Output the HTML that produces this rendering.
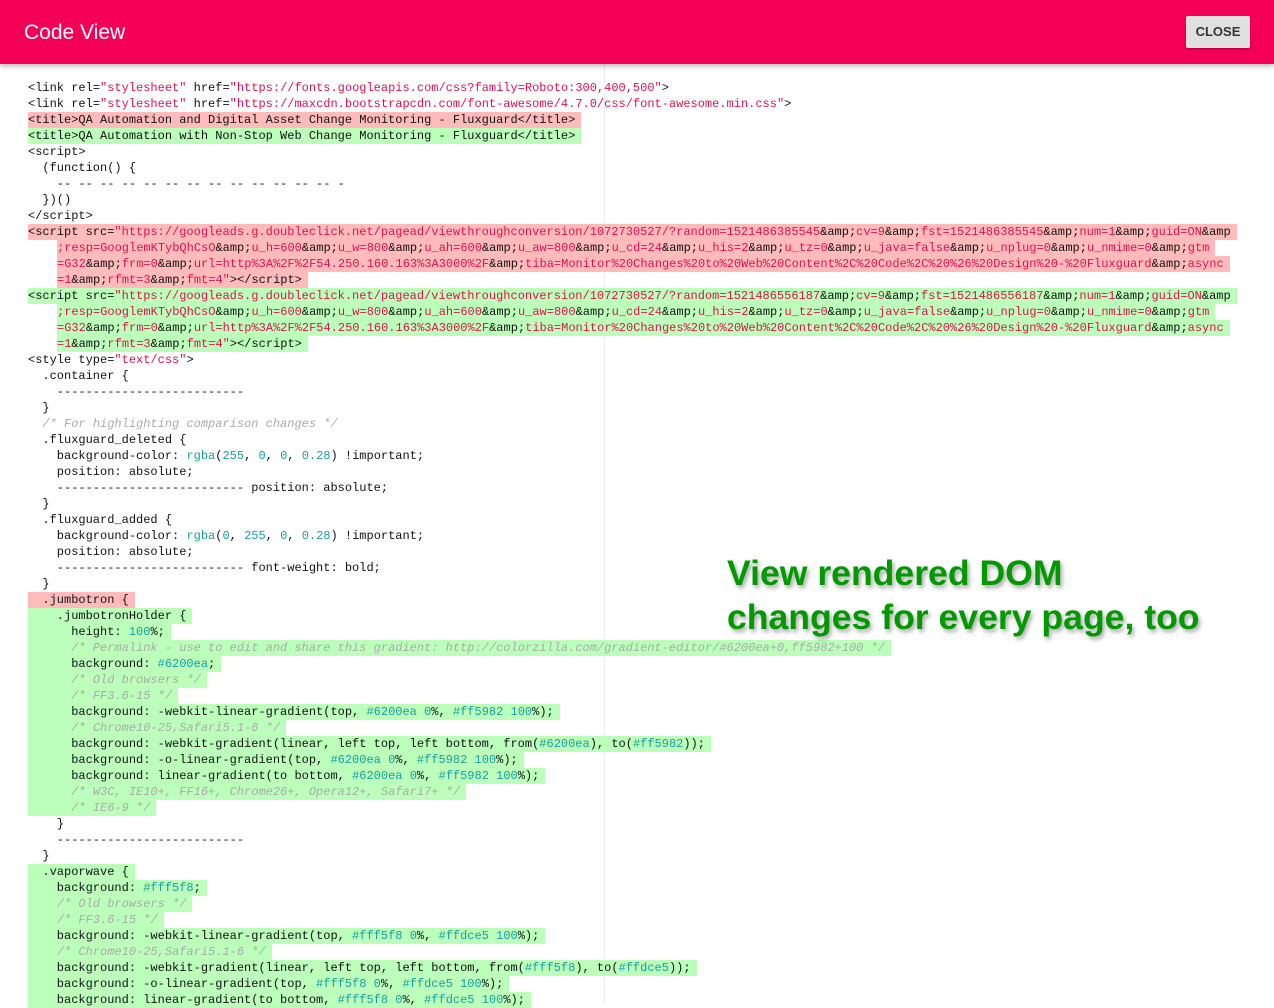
<!DOCTYPE html>
<html><head><meta charset="utf-8">
<style>
html,body{margin:0;padding:0;width:1274px;height:1003px;overflow:hidden;background:#fff;}
.hdr{position:absolute;left:0;top:0;width:1274px;height:64px;background:#f50057;box-shadow:0 2px 5px rgba(0,0,0,0.3);z-index:2;}
.hdr .t{position:absolute;left:24px;top:21px;font:500 21px "Liberation Sans",sans-serif;color:#fff;}
.btn{position:absolute;left:1186px;top:16px;width:64px;height:32px;background:#e0e0e0;border-radius:2px;box-shadow:0 1px 2px rgba(0,0,0,0.3);font:bold 13px "Liberation Sans",sans-serif;color:#333;text-align:center;line-height:32px;}
.vl{position:absolute;left:604px;top:64px;width:1px;height:939px;background:#ececec;}
.code{position:absolute;left:28px;top:80px;font-family:"Liberation Mono",monospace;font-size:12px;line-height:16px;color:#111;}
.l{height:16px;white-space:pre;}
.d,.a{display:inline-block;height:16px;padding-right:6px;vertical-align:top;}
.d{background:#ffbbbb;}
.a{background:#bbffbb;}
.ind{margin-left:29px;}
.s{color:#e0114f;}
.n{color:#16a0a0;}
.c{color:#aaa;font-style:italic;}
.big{position:absolute;left:727px;top:551px;font:bold 35.6px/44px "Liberation Sans",sans-serif;color:#009900;text-shadow:2px 3px 4px rgba(0,0,0,0.35);white-space:nowrap;}
</style></head><body>
<div class="hdr"><div class="t">Code View</div><div class="btn">CLOSE</div></div>
<div class="vl"></div>
<div class="code">
<div class="l">&lt;link rel=<span class="s">"stylesheet"</span> href=<span class="s">"https://fonts.googleapis.com/css?family=Roboto:300,400,500"</span>&gt;</div>
<div class="l">&lt;link rel=<span class="s">"stylesheet"</span> href=<span class="s">"https://maxcdn.bootstrapcdn.com/font-awesome/4.7.0/css/font-awesome.min.css"</span>&gt;</div>
<div class="l"><span class="d">&lt;title&gt;QA Automation and Digital Asset Change Monitoring - Fluxguard&lt;/title&gt;</span></div>
<div class="l"><span class="a">&lt;title&gt;QA Automation with Non-Stop Web Change Monitoring - Fluxguard&lt;/title&gt;</span></div>
<div class="l">&lt;script&gt;</div>
<div class="l">  (function() {</div>
<div class="l">    -- -- -- -- -- -- -- -- -- -- -- -- -- -</div>
<div class="l">  })()</div>
<div class="l">&lt;/script&gt;</div>
<div class="l"><span class="d">&lt;script src=<span class="s">"https://googleads.g.doubleclick.net/pagead/viewthroughconversion/1072730527/?random=1521486385545</span>&amp;amp;<span class="s">cv=9</span>&amp;amp;<span class="s">fst=1521486385545</span>&amp;amp;<span class="s">num=1</span>&amp;amp;<span class="s">guid=ON</span>&amp;amp</span></div>
<div class="l"><span class="d ind"><span class="s">;resp=GooglemKTybQhCsO</span>&amp;amp;<span class="s">u_h=600</span>&amp;amp;<span class="s">u_w=800</span>&amp;amp;<span class="s">u_ah=600</span>&amp;amp;<span class="s">u_aw=800</span>&amp;amp;<span class="s">u_cd=24</span>&amp;amp;<span class="s">u_his=2</span>&amp;amp;<span class="s">u_tz=0</span>&amp;amp;<span class="s">u_java=false</span>&amp;amp;<span class="s">u_nplug=0</span>&amp;amp;<span class="s">u_nmime=0</span>&amp;amp;<span class="s">gtm</span></span></div>
<div class="l"><span class="d ind"><span class="s">=G32</span>&amp;amp;<span class="s">frm=0</span>&amp;amp;<span class="s">url=http%3A%2F%2F54.250.160.163%3A3000%2F</span>&amp;amp;<span class="s">tiba=Monitor%20Changes%20to%20Web%20Content%2C%20Code%2C%20%26%20Design%20-%20Fluxguard</span>&amp;amp;<span class="s">async</span></span></div>
<div class="l"><span class="d ind"><span class="s">=1</span>&amp;amp;<span class="s">rfmt=3</span>&amp;amp;<span class="s">fmt=4"</span>&gt;&lt;/script&gt;</span></div>
<div class="l"><span class="a">&lt;script src=<span class="s">"https://googleads.g.doubleclick.net/pagead/viewthroughconversion/1072730527/?random=1521486556187</span>&amp;amp;<span class="s">cv=9</span>&amp;amp;<span class="s">fst=1521486556187</span>&amp;amp;<span class="s">num=1</span>&amp;amp;<span class="s">guid=ON</span>&amp;amp</span></div>
<div class="l"><span class="a ind"><span class="s">;resp=GooglemKTybQhCsO</span>&amp;amp;<span class="s">u_h=600</span>&amp;amp;<span class="s">u_w=800</span>&amp;amp;<span class="s">u_ah=600</span>&amp;amp;<span class="s">u_aw=800</span>&amp;amp;<span class="s">u_cd=24</span>&amp;amp;<span class="s">u_his=2</span>&amp;amp;<span class="s">u_tz=0</span>&amp;amp;<span class="s">u_java=false</span>&amp;amp;<span class="s">u_nplug=0</span>&amp;amp;<span class="s">u_nmime=0</span>&amp;amp;<span class="s">gtm</span></span></div>
<div class="l"><span class="a ind"><span class="s">=G32</span>&amp;amp;<span class="s">frm=0</span>&amp;amp;<span class="s">url=http%3A%2F%2F54.250.160.163%3A3000%2F</span>&amp;amp;<span class="s">tiba=Monitor%20Changes%20to%20Web%20Content%2C%20Code%2C%20%26%20Design%20-%20Fluxguard</span>&amp;amp;<span class="s">async</span></span></div>
<div class="l"><span class="a ind"><span class="s">=1</span>&amp;amp;<span class="s">rfmt=3</span>&amp;amp;<span class="s">fmt=4"</span>&gt;&lt;/script&gt;</span></div>
<div class="l">&lt;style type=<span class="s">"text/css"</span>&gt;</div>
<div class="l">  .container {</div>
<div class="l">    --------------------------</div>
<div class="l">  }</div>
<div class="l">  <span class="c">/* For highlighting comparison changes */</span></div>
<div class="l">  .fluxguard_deleted {</div>
<div class="l">    background-color: <span class="n">rgba</span>(<span class="n">255</span>, <span class="n">0</span>, <span class="n">0</span>, <span class="n">0.28</span>) !important;</div>
<div class="l">    position: absolute;</div>
<div class="l">    -------------------------- position: absolute;</div>
<div class="l">  }</div>
<div class="l">  .fluxguard_added {</div>
<div class="l">    background-color: <span class="n">rgba</span>(<span class="n">0</span>, <span class="n">255</span>, <span class="n">0</span>, <span class="n">0.28</span>) !important;</div>
<div class="l">    position: absolute;</div>
<div class="l">    -------------------------- font-weight: bold;</div>
<div class="l">  }</div>
<div class="l"><span class="d">  .jumbotron {</span></div>
<div class="l"><span class="a">    .jumbotronHolder {</span></div>
<div class="l"><span class="a">      height: <span class="n">100</span>%;</span></div>
<div class="l"><span class="a">      <span class="c">/* Permalink - use to edit and share this gradient: http://colorzilla.com/gradient-editor/#6200ea+0,ff5982+100 */</span></span></div>
<div class="l"><span class="a">      background: <span class="n">#6200ea</span>;</span></div>
<div class="l"><span class="a">      <span class="c">/* Old browsers */</span></span></div>
<div class="l"><span class="a">      <span class="c">/* FF3.6-15 */</span></span></div>
<div class="l"><span class="a">      background: -webkit-linear-gradient(top, <span class="n">#6200ea</span> <span class="n">0</span>%, <span class="n">#ff5982</span> <span class="n">100</span>%);</span></div>
<div class="l"><span class="a">      <span class="c">/* Chrome10-25,Safari5.1-6 */</span></span></div>
<div class="l"><span class="a">      background: -webkit-gradient(linear, left top, left bottom, from(<span class="n">#6200ea</span>), to(<span class="n">#ff5982</span>));</span></div>
<div class="l"><span class="a">      background: -o-linear-gradient(top, <span class="n">#6200ea</span> <span class="n">0</span>%, <span class="n">#ff5982</span> <span class="n">100</span>%);</span></div>
<div class="l"><span class="a">      background: linear-gradient(to bottom, <span class="n">#6200ea</span> <span class="n">0</span>%, <span class="n">#ff5982</span> <span class="n">100</span>%);</span></div>
<div class="l"><span class="a">      <span class="c">/* W3C, IE10+, FF16+, Chrome26+, Opera12+, Safari7+ */</span></span></div>
<div class="l"><span class="a">      <span class="c">/* IE6-9 */</span></span></div>
<div class="l">    }</div>
<div class="l">    --------------------------</div>
<div class="l">  }</div>
<div class="l"><span class="a">  .vaporwave {</span></div>
<div class="l"><span class="a">    background: <span class="n">#fff5f8</span>;</span></div>
<div class="l"><span class="a">    <span class="c">/* Old browsers */</span></span></div>
<div class="l"><span class="a">    <span class="c">/* FF3.6-15 */</span></span></div>
<div class="l"><span class="a">    background: -webkit-linear-gradient(top, <span class="n">#fff5f8</span> <span class="n">0</span>%, <span class="n">#ffdce5</span> <span class="n">100</span>%);</span></div>
<div class="l"><span class="a">    <span class="c">/* Chrome10-25,Safari5.1-6 */</span></span></div>
<div class="l"><span class="a">    background: -webkit-gradient(linear, left top, left bottom, from(<span class="n">#fff5f8</span>), to(<span class="n">#ffdce5</span>));</span></div>
<div class="l"><span class="a">    background: -o-linear-gradient(top, <span class="n">#fff5f8</span> <span class="n">0</span>%, <span class="n">#ffdce5</span> <span class="n">100</span>%);</span></div>
<div class="l"><span class="a">    background: linear-gradient(to bottom, <span class="n">#fff5f8</span> <span class="n">0</span>%, <span class="n">#ffdce5</span> <span class="n">100</span>%);</span></div>
</div>
<div class="big">View rendered DOM<br>changes for every page, too</div>
</body></html>
